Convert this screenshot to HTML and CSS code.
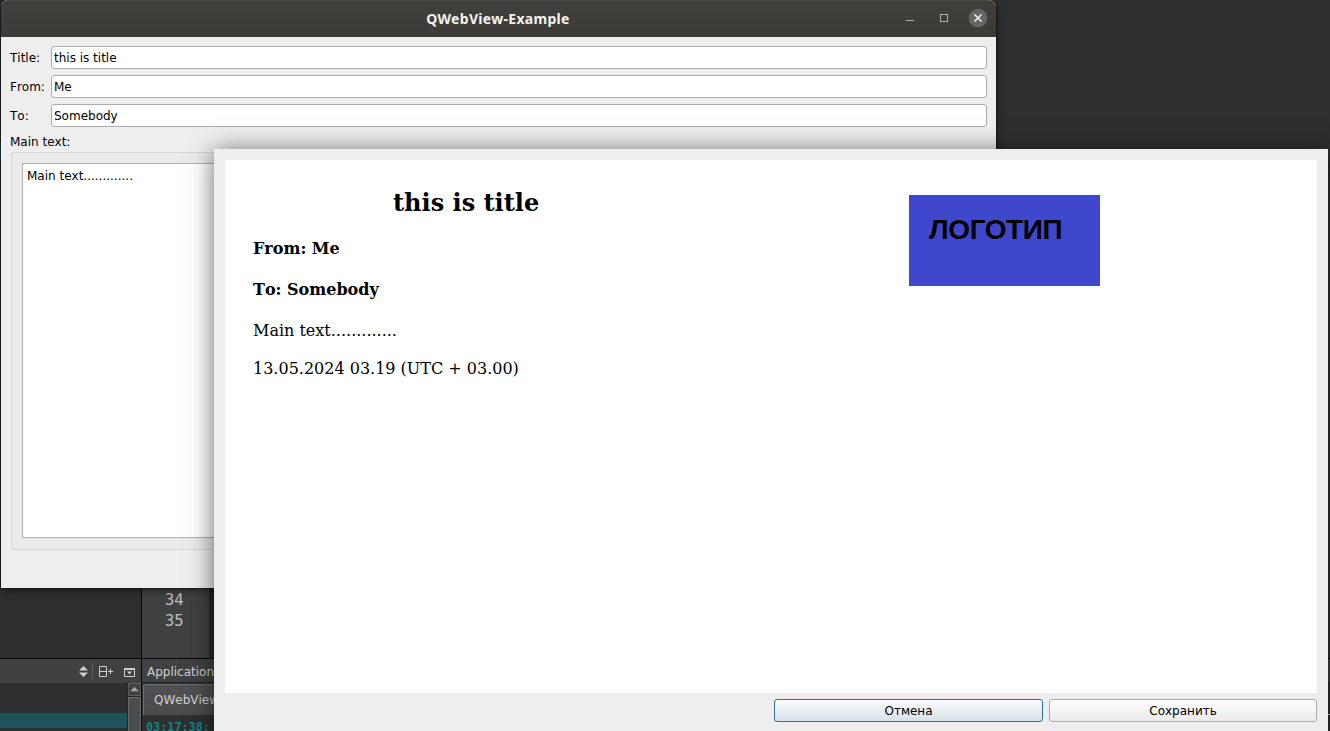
FILE: index.html
```html
<!DOCTYPE html>
<html lang="ru">
<head>
<meta charset="utf-8">
<title>QWebView-Example</title>
<link rel="stylesheet" href="styles.css">
</head>
<body>
<div class="desktop">
  <div class="ide">
    <div class="ide-main">
      <div class="ide-side"><div class="side-mark"></div></div>
      <div class="gutter"><div>34</div><div>35</div></div>
      <div class="editor"></div>
    </div>
    <div class="ide-bottom">
      <div class="dock">
        <div class="dock-bar">
          <svg width="65" height="24" viewBox="0 0 65 24" fill="none">
            <path d="M3 11.500L7.500 7L12 11.500ZM3 13.500L7.500 18L12 13.500Z" fill="#cfcfcf"/>
            <path d="M16.500 4V20" stroke="#606162"/>
            <path d="M23.500 7.500H30.500V17.500H23.500ZM23.500 12.500H30.500M32 12.500H37M34.500 10V15" stroke="#cfcfcf"/>
            <path d="M48.500 9V17.500H58.500V9" stroke="#cfcfcf"/>
            <path d="M48 10H59" stroke="#cfcfcf" stroke-width="2"/>
            <path d="M51 12.500H56L53.500 15.500Z" fill="#cfcfcf"/>
          </svg>
        </div>
        <div class="dock-body">
          <div class="list"><div class="selected"></div></div>
          <div class="scrollbar">
            <svg class="up" width="13" height="13" viewBox="0 0 13 13"><path d="M1.500 8.500L6.500 3.500L11.500 8.500Z" fill="#a5a6a7"/></svg>
            <div class="thumb"></div>
          </div>
        </div>
      </div>
      <div class="output">
        <div class="output-title">Application</div>
        <div class="tab">QWebView</div>
        <div class="log"><span>03:17:38:</span><i class="output-line"></i></div>
      </div>
    </div>
  </div>

  <div class="window">
    <div class="titlebar">
      <span class="window-title">QWebView-Example</span>
      <svg class="controls" width="90" height="24" viewBox="0 0 90 24" fill="none">
        <path d="M4 14.500H12" stroke="#b3b1ad"/>
        <rect x="38.500" y="8.500" width="7" height="7" stroke="#b3b1ad"/>
        <circle cx="76" cy="12" r="9.300" fill="#656565"/>
        <path d="M72.500 8.500L79.500 15.500M79.500 8.500L72.500 15.500" stroke="#f2f2f2" stroke-width="1.500"/>
      </svg>
    </div>
    <div class="form">
      <div class="field"><span class="label">Title:</span><div class="input">this is title</div></div>
      <div class="field"><span class="label">From:</span><div class="input">Me</div></div>
      <div class="field"><span class="label">To:</span><div class="input">Somebody</div></div>
      <div class="caption">Main text:</div>
      <div class="group"><div class="textarea">Main text.............</div></div>
    </div>
  </div>

  <div class="dialog">
    <div class="page">
      <div class="letter">
        <h2>this is title</h2>
        <h4>From: Me</h4>
        <h4>To: Somebody</h4>
        <p>Main text.............</p>
        <p>13.05.2024 03.19 (UTC + 03.00)</p>
      </div>
      <div class="logo">ЛОГОТИП</div>
    </div>
    <div class="buttons">
      <div class="button primary">Отмена</div>
      <div class="button">Сохранить</div>
    </div>
  </div>
</div>
</body>
</html>
```
FILE: styles.css
```css
* { box-sizing: border-box; }
body { margin: 0; background: #2e2f30; overflow: hidden; }
.desktop {
  position: relative;
  width: 1330px;
  height: 731px;
  overflow: hidden;
  background: #2e2f30;
  font: 12px/14px "DejaVu Sans", sans-serif;
  font-kerning: none;
  color: #000;
}

/* Editor in the background */
.ide { display: flex; flex-direction: column; height: 731px; }
.ide-main { display: flex; height: 659px; border-bottom: 1px solid #050607; }
.ide-side { width: 142px; border-right: 1px solid #050607; padding-top: 142px; }
.side-mark { width: 1px; height: 18px; background: #1d545c; }
.gutter {
  width: 67px;
  padding-top: 590px;
  padding-left: 23px;
  background: #404142;
  color: #bec0c2;
  font: 15.5px/21px "DejaVu Sans Mono", monospace;
}
.editor { width: 5px; background: #272822; }
.ide-bottom { display: flex; height: 72px; }
.dock { width: 142px; border-right: 1px solid #050607; }
.dock-bar { display: flex; justify-content: flex-end; height: 24px; background: #404142; }
.dock-body { display: flex; height: 48px; }
.list { width: 127px; padding-top: 30px; }
.selected { height: 15px; background: #1d545c; }
.scrollbar { width: 14px; padding-left: 1px; background: #252627; }
.up { display: block; border: 1px solid #5c5d5e; background: #404142; }
.thumb { height: 36px; margin-top: 1px; border: 1px solid #6a6b6c; background: #4c4d4e; }
.output { width: 1188px; background: #2e2f30; }
.output-title { height: 24px; padding: 6px 5px 0; background: #404142; color: #d0d0d0; border-bottom: 1px solid #252627; }
.tab {
  width: 180px;
  height: 31px;
  margin: 1px 0 0 1px;
  padding: 8px 10px;
  border: 1px solid #6a6b6c;
  border-width: 1px 0 0 1px;
  border-radius: 2px 0 0;
  background: linear-gradient(#505152, #4a4b4c);
  color: #d0d0d0;
}
.log {
  display: flex;
  justify-content: space-between;
  height: 16px;
  padding-left: 4px;
  color: #0e8480;
  font: bold 11.8px/12px "DejaVu Sans Mono", monospace;
}
.log span { padding-top: 6px; }
.output-line { width: 2px; height: 1px; margin-top: -1px; background: #d0d0d0; }

/* Main window */
.window {
  position: absolute;
  left: 1px;
  top: 0;
  width: 995px;
  height: 588px;
  border-radius: 7px 7px 0 0;
  background: #eee;
  box-shadow: 0 2px 10px rgba(0, 0, 0, .55), 0 0 0 1px rgba(0, 0, 0, .3);
}
.titlebar {
  display: grid;
  grid-template-columns: 1fr auto 1fr;
  align-items: center;
  height: 37px;
  padding-bottom: 1px;
  border-top: 1px solid #4b4a47;
  border-radius: 7px 7px 0 0;
  background: linear-gradient(#403f3c, #3c3b38);
}
.window-title {
  grid-column: 2;
  margin-right: 1px;
  color: #f4f3f0;
  font: bold 14px/20px "Noto Sans", sans-serif;
  letter-spacing: .3px;
}
.controls { justify-self: end; margin-right: 4px; margin-bottom: 1px; }
.form { padding: 9px 9px 0; }
.field { display: flex; align-items: center; height: 23px; margin-bottom: 6px; }
.label { width: 41px; }
.input {
  flex: 1;
  height: 23px;
  padding: 4px 2px;
  border: 1px solid #ababab;
  border-radius: 3px;
  background: #fff;
}
.caption { height: 19px; padding-top: 2px; }
.group {
  height: 398px;
  margin: 0 0 0 1px;
  padding: 10px;
  border: 1px solid #d5d5d5;
  border-radius: 2px;
  background: #ebebeb;
}
.textarea { height: 375px; padding: 5px 4px; border: 1px solid #b1b1b1; background: #fff; }

/* Preview dialog */
.dialog {
  position: absolute;
  left: 214px;
  top: 149px;
  width: 1114px;
  height: 600px;
  padding: 11px;
  background: #eee;
  box-shadow: 0 3px 24px rgba(0, 0, 0, .6);
}
.page {
  display: flex;
  width: 1092px;
  height: 533px;
  background: #fff;
  font: 16px/19px "DejaVu Serif", serif;
  font-kerning: none;
}
.letter { width: 684px; padding: 28px 28px 0; }
.letter h2 { margin: 0 0 22px 140px; font-size: 24px; line-height: 29px; }
.letter h4 { margin: 0 0 22px; font-size: 16px; line-height: 19px; }
.letter p { margin: 0 0 19px; }
.logo {
  width: 191px;
  height: 91px;
  margin-top: 35px;
  padding: 18px 20px;
  background: #3f48cc;
  font: bold 28px/34px "Liberation Sans", sans-serif;
  letter-spacing: -.4px;
}
.buttons { display: flex; gap: 6px; justify-content: flex-end; padding-top: 6px; }
.button {
  width: 268px;
  height: 23px;
  border: 1px solid #ababab;
  border-radius: 3px;
  background: linear-gradient(#fefefe, #ebebeb);
  line-height: 22px;
  text-align: center;
}
.primary { width: 269px; border-color: #2d73a0; background: linear-gradient(#fbfcfd, #d8e1e8); }
```
